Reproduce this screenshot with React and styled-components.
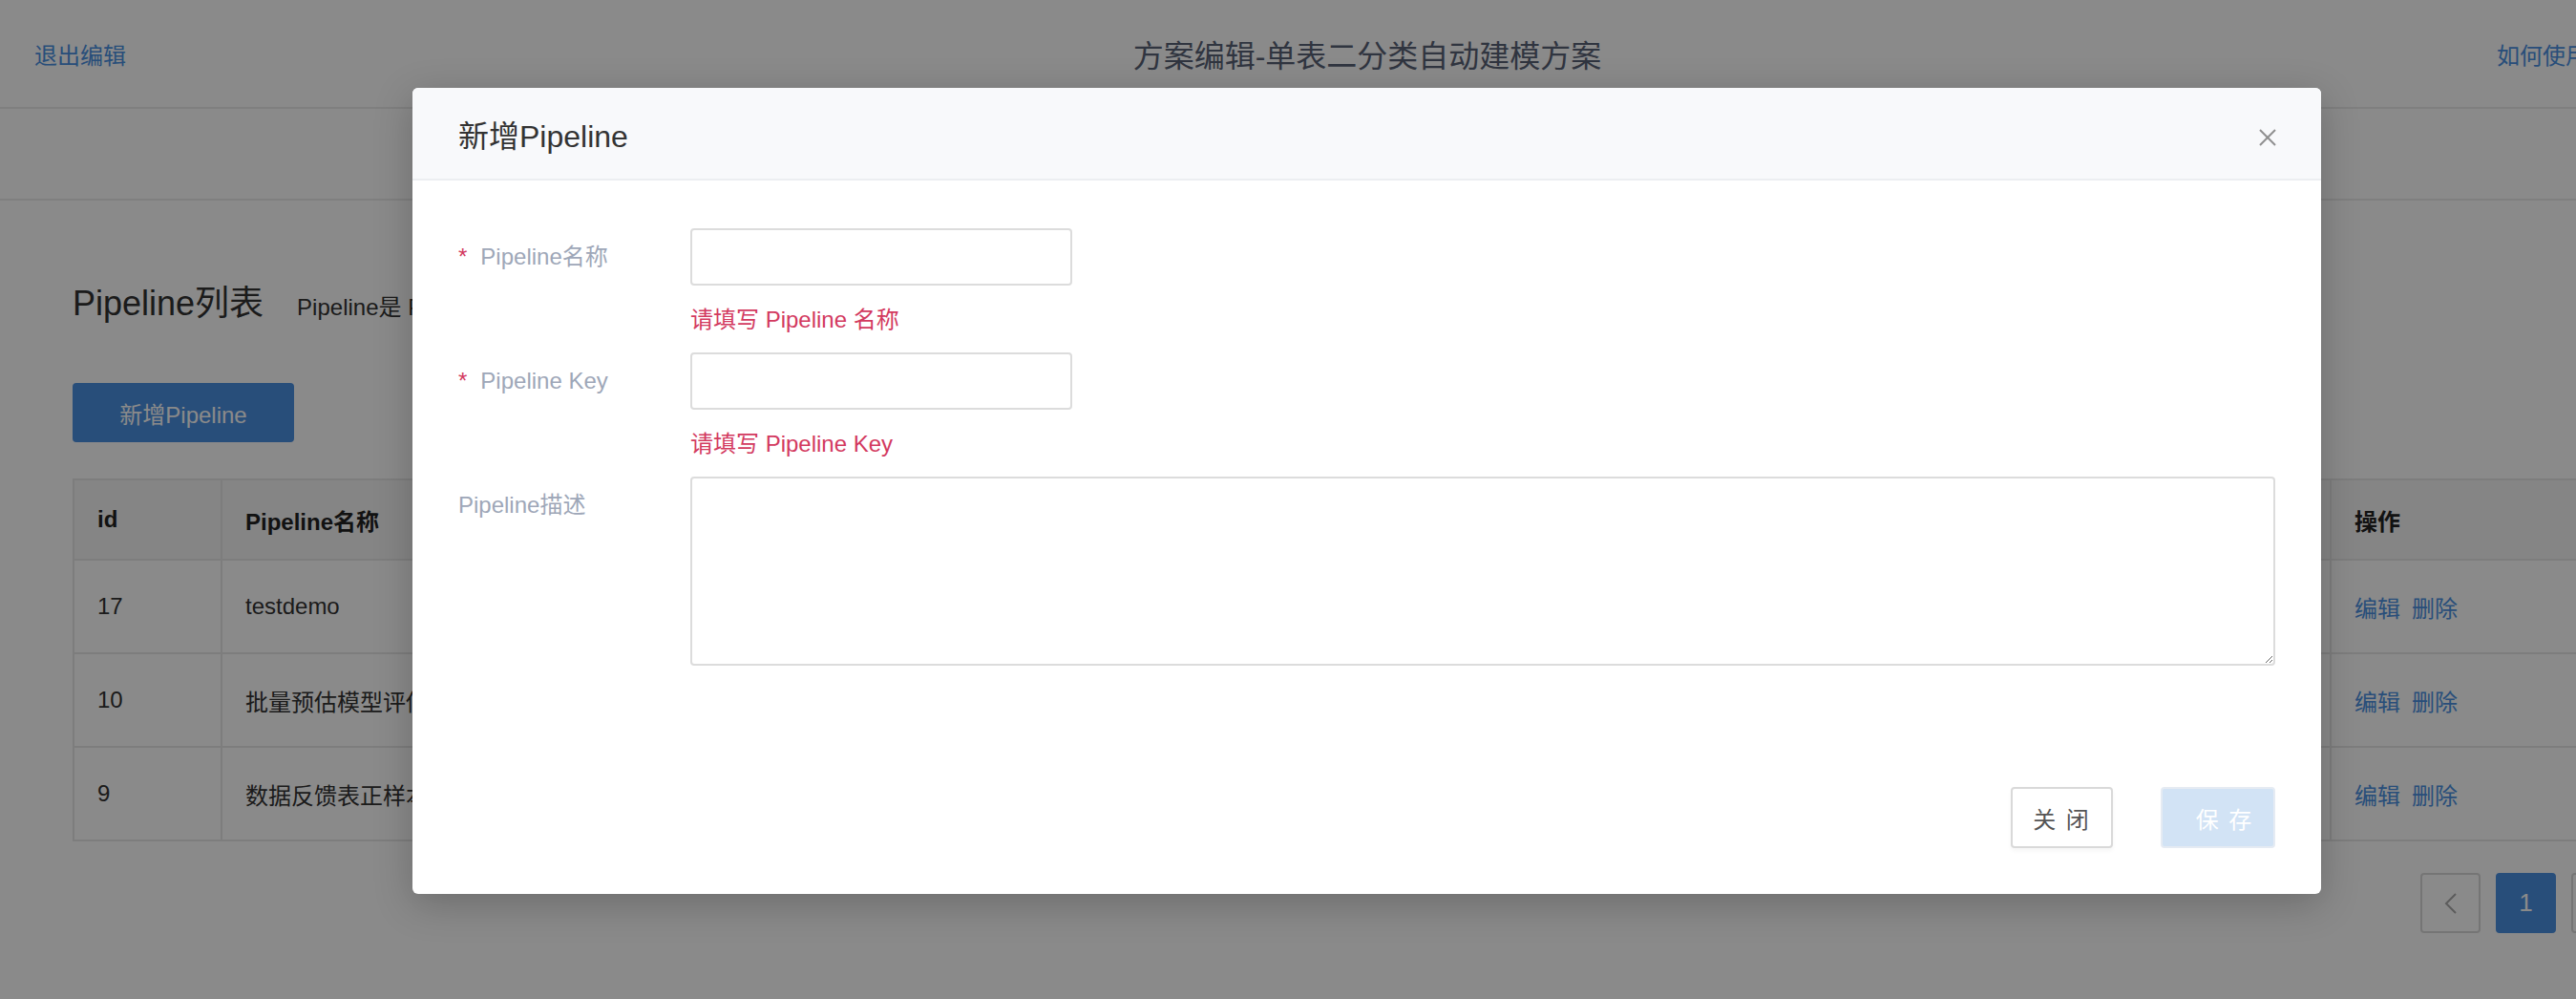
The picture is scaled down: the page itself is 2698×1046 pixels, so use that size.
import React from "react";
import styled, { createGlobalStyle } from "styled-components";

const GlobalStyle = createGlobalStyle`
  html, body { margin: 0; padding: 0; overflow: hidden; }
  body {
    font-family: "Liberation Sans", "Noto Sans CJK SC", sans-serif;
    background: #fff;
    color: #333;
  }
  * { box-sizing: border-box; }
`;

const Page = styled.div`
  position: relative;
  width: 2864px;
  height: 100vh;
  background: #fff;
`;

const Header = styled.header`
  display: grid;
  grid-template-columns: 1fr auto 1fr;
  align-items: center;
  height: 114px;
  padding: 0 36px;
  border-bottom: 2px solid #ebebeb;
`;

const HeaderLink = styled.a`
  font-size: 24px;
  color: #4a90e2;
  justify-self: ${(p) => (p.$right ? "end" : "start")};
  margin-right: ${(p) => (p.$right ? "117px" : "0")};
`;

const HeaderTitle = styled.h1`
  margin: 0;
  font-size: 32px;
  font-weight: normal;
  color: #5a6377;
`;

const SubBar = styled.div`
  height: 96px;
  border-bottom: 2px solid #ebebeb;
`;

const Content = styled.main`
  padding: 83px 76px 0;
`;

const TitleRow = styled.div`
  display: flex;
  align-items: baseline;
  gap: 35px;
  height: 50px;
`;

const PageTitle = styled.h2`
  margin: 0;
  font-size: 36px;
  line-height: 50px;
  font-weight: normal;
  color: #333;
`;

const Desc = styled.span`
  font-size: 24px;
  color: #333;
  white-space: nowrap;
`;

const PrimaryButton = styled.button`
  display: block;
  margin-top: 58px;
  width: 232px;
  height: 62px;
  border: none;
  border-radius: 4px;
  background: #4a90e2;
  color: #fff;
  font-family: inherit;
  font-size: 24px;
`;

const Table = styled.table`
  margin-top: 38px;
  width: 2712px;
  border-collapse: collapse;
  table-layout: fixed;
`;

const Th = styled.th`
  height: 84px;
  padding: 0 24px;
  text-align: left;
  font-size: 24px;
  font-weight: bold;
  color: #222;
  background: #f6f6f6;
  border: 2px solid #e8e8e8;
`;

const Td = styled.td`
  height: 98px;
  padding: 0 24px;
  font-size: 24px;
  color: #333;
  border: 2px solid #e8e8e8;
  white-space: nowrap;
  overflow: hidden;
`;

const OpLink = styled.a`
  color: #4a90e2;
  font-size: 24px;
  margin-right: 12px;
`;

const Pagination = styled.div`
  display: flex;
  justify-content: flex-end;
  gap: 16px;
  margin-top: 33px;
  padding-right: 32px;
`;

const PageBtn = styled.button`
  width: 63px;
  height: 63px;
  display: flex;
  align-items: center;
  justify-content: center;
  border: 2px solid ${(p) => (p.$active ? "#4a90e2" : "#d9d9d9")};
  border-radius: 4px;
  background: ${(p) => (p.$active ? "#4a90e2" : "#fff")};
  color: ${(p) => (p.$active ? "#fff" : "#999")};
  font-family: inherit;
  font-size: 26px;
`;

const Overlay = styled.div`
  position: absolute;
  inset: 0;
  background: rgba(0, 0, 0, 0.46);
`;

const Modal = styled.div`
  position: absolute;
  top: 92px;
  left: 432px;
  width: 1999px;
  background: #fff;
  border-radius: 6px;
  box-shadow: 0 10px 40px rgba(0, 0, 0, 0.22);
`;

const ModalHeader = styled.div`
  display: flex;
  align-items: center;
  justify-content: space-between;
  height: 97px;
  padding: 0 46px 0 48px;
  background: #f8f9fb;
  border-bottom: 2px solid #eceef1;
  border-radius: 6px 6px 0 0;
`;

const ModalTitle = styled.div`
  font-size: 32px;
  color: #333;
`;

const CloseBtn = styled.button`
  display: flex;
  padding: 0;
  margin-top: 8px;
  border: none;
  background: transparent;
`;

const ModalBody = styled.div`
  padding: 50px 48px 48px;
`;

const FormRow = styled.div`
  display: grid;
  grid-template-columns: 243px 1fr;
`;

const Label = styled.label`
  font-size: 24px;
  line-height: 60px;
  color: #9ea7b8;
  white-space: nowrap;
`;

const Star = styled.span`
  color: #d33a5f;
  margin-right: 14px;
`;

const Input = styled.input`
  display: block;
  width: 400px;
  height: 60px;
  border: 2px solid #dcdcdc;
  border-radius: 4px;
  background: #fff;
  font-family: inherit;
  font-size: 24px;
`;

const ErrorText = styled.div`
  padding: 19px 0 17px;
  font-size: 24px;
  line-height: 34px;
  color: #d33a5f;
`;

const TextArea = styled.textarea`
  display: block;
  width: 100%;
  height: 198px;
  border: 2px solid #dcdcdc;
  border-radius: 4px;
  font-family: inherit;
  font-size: 24px;
`;

const Footer = styled.div`
  display: flex;
  justify-content: flex-end;
  gap: 50px;
  margin-top: 127px;
`;

const FooterBtn = styled.button`
  width: ${(p) => (p.$primary ? "120px" : "107px")};
  height: 64px;
  padding: 0 0 0 ${(p) => (p.$primary ? "14px" : "0")};
  border: 2px solid ${(p) => (p.$primary ? "#e5ebf3" : "#d9d9d9")};
  border-radius: 4px;
  background: ${(p) => (p.$primary ? "#d2e3f5" : "#fff")};
  color: ${(p) => (p.$primary ? "#fff" : "#555")};
  font-family: inherit;
  font-size: 24px;
  letter-spacing: 2px;
  box-shadow: ${(p) => (p.$primary ? "none" : "0 3px 4px rgba(0,0,0,0.04)")};
`;

const rows = [
  { id: 17, name: "testdemo", key: "testdemo", desc: "测试", user: "admin", time: "2019-08-12 10:20:31" },
  { id: 10, name: "批量预估模型评估", key: "batch_predict_eval", desc: "批量预估", user: "admin", time: "2019-07-30 16:02:11" },
  { id: 9, name: "数据反馈表正样本统计", key: "feedback_positive", desc: "数据反馈", user: "admin", time: "2019-07-29 11:45:08" },
];

const ChevronLeft = () => (
  <svg width="14" height="24" viewBox="0 0 14 24" fill="none">
    <polyline points="12,2 2,12 12,22" stroke="#aaa" strokeWidth="2" />
  </svg>
);

const ChevronRight = () => (
  <svg width="14" height="24" viewBox="0 0 14 24" fill="none">
    <polyline points="2,2 12,12 2,22" stroke="#aaa" strokeWidth="2" />
  </svg>
);

const CloseIcon = () => (
  <svg width="20" height="20" viewBox="0 0 20 20" fill="none">
    <line x1="2" y1="2" x2="18" y2="18" stroke="#8f8f8f" strokeWidth="2" />
    <line x1="18" y1="2" x2="2" y2="18" stroke="#8f8f8f" strokeWidth="2" />
  </svg>
);

export default function App() {
  return (
    <>
      <GlobalStyle />
      <Page>
        <Header>
          <HeaderLink>退出编辑</HeaderLink>
          <HeaderTitle>方案编辑-单表二分类自动建模方案</HeaderTitle>
          <HeaderLink $right>如何使用</HeaderLink>
        </Header>
        <SubBar />
        <Content>
          <TitleRow>
            <PageTitle>Pipeline列表</PageTitle>
            <Desc>Pipeline是 Pipeline 模板的实例化</Desc>
          </TitleRow>
          <PrimaryButton>新增Pipeline</PrimaryButton>
          <Table>
            <colgroup>
              <col style={{ width: "155px" }} />
              <col style={{ width: "500px" }} />
              <col style={{ width: "400px" }} />
              <col style={{ width: "700px" }} />
              <col style={{ width: "300px" }} />
              <col style={{ width: "309px" }} />
              <col style={{ width: "348px" }} />
            </colgroup>
            <thead>
              <tr>
                <Th>id</Th>
                <Th>Pipeline名称</Th>
                <Th>Pipeline Key</Th>
                <Th>Pipeline描述</Th>
                <Th>创建人</Th>
                <Th>创建时间</Th>
                <Th>操作</Th>
              </tr>
            </thead>
            <tbody>
              {rows.map((r) => (
                <tr key={r.id}>
                  <Td>{r.id}</Td>
                  <Td>{r.name}</Td>
                  <Td>{r.key}</Td>
                  <Td>{r.desc}</Td>
                  <Td>{r.user}</Td>
                  <Td>{r.time}</Td>
                  <Td>
                    <OpLink>编辑</OpLink>
                    <OpLink>删除</OpLink>
                  </Td>
                </tr>
              ))}
            </tbody>
          </Table>
          <Pagination>
            <PageBtn><ChevronLeft /></PageBtn>
            <PageBtn $active>1</PageBtn>
            <PageBtn><ChevronRight /></PageBtn>
          </Pagination>
        </Content>
        <Overlay />
        <Modal>
          <ModalHeader>
            <ModalTitle>新增Pipeline</ModalTitle>
            <CloseBtn><CloseIcon /></CloseBtn>
          </ModalHeader>
          <ModalBody>
            <FormRow>
              <Label><Star>*</Star>Pipeline名称</Label>
              <div>
                <Input />
                <ErrorText>请填写 Pipeline 名称</ErrorText>
              </div>
            </FormRow>
            <FormRow>
              <Label><Star>*</Star>Pipeline Key</Label>
              <div>
                <Input />
                <ErrorText>请填写 Pipeline Key</ErrorText>
              </div>
            </FormRow>
            <FormRow>
              <Label>Pipeline描述</Label>
              <TextArea />
            </FormRow>
            <Footer>
              <FooterBtn>关 闭</FooterBtn>
              <FooterBtn $primary>保 存</FooterBtn>
            </Footer>
          </ModalBody>
        </Modal>
      </Page>
    </>
  );
}
